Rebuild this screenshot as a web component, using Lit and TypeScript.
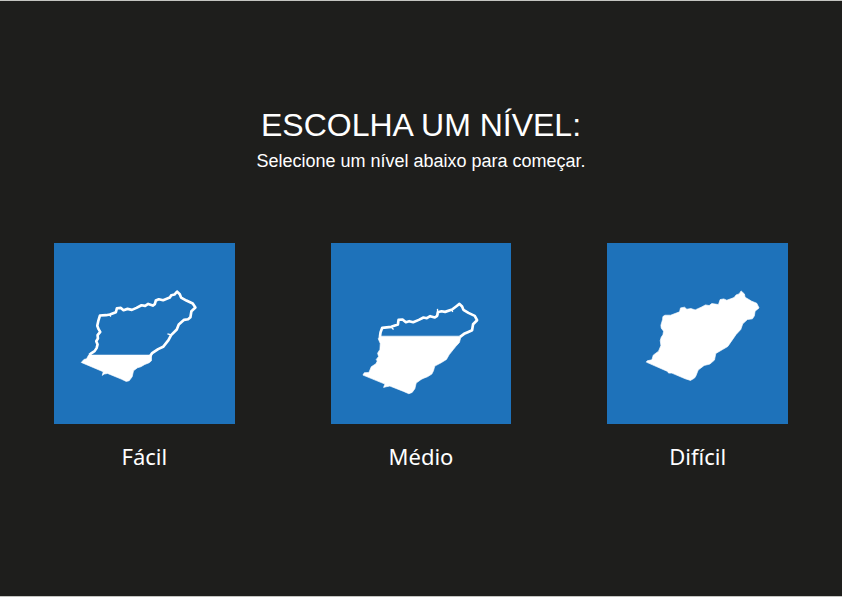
import { LitElement, html, css, svg } from "lit";
import { customElement, property } from "lit/decorators.js";

interface Level {
  name: string;
  outline: string;
  spurs: string;
  fill: string;
  x: number;
  y: number;
}

const LEVELS: Level[] = [
  {
    name: "Fácil",
    x: 48,
    y: 111,
    outline:
      "M58 226L66 219L74 214L80 205L83 194L79 184L84 176L83 166L91 156L86 148L82 138L85 124L90 107L108 106L120 104L138 97L141 85L153 84L161 91L173 87L186 90L200 84L215 76L226 78L235 72L249 77L255 73L258 62L267 58L280 61L300 53L305 46L314 44L322 35L330 43L334 53L350 62L369 71L377 83L365 94L362 112L355 118L343 120L327 134L321 149L304 166L296 181L280 201L265 208L247 220L240 230",
    spurs: "M118 104L123 110M293 162L305 165M300 55L303 44",
    fill:
      "M56 226H245L245 243L238 249L225 254L213 261L203 264L191 273L187 291L178 303L169 305L154 298L113 281L103 283L97 287L100 276L34 248L42 239L50 237Z",
  },
  {
    name: "Médio",
    x: 57,
    y: 141,
    outline:
      "M90 141L92 127L97 114L124 111L144 104L146 90L158 89L168 97L178 94L190 97L207 90L221 83L231 85L241 79L255 83L262 78L264 67L275 64L286 66L307 59L320 49L329 42L337 50L341 60L356 69L375 78L382 91L370 103L367 121L354 127L343 132L331 141",
    spurs: "M263 57L264 76M123 111L131 119M306 61L309 66",
    fill:
      "M89 139H334L329 158L318 170L310 180L298 195L290 209L274 219L255 229L251 243L246 253L233 261L220 266L214 269L199 280L195 297L187 308L177 312L161 305L120 289L109 291L101 293L105 283L39 256L43 249L57 248L64 231L78 222L82 214L79 209L86 200L83 190L90 179L91 161L85 147Z",
  },
  {
    name: "Difícil",
    x: 84,
    y: 111,
    outline: "",
    spurs: "",
    fill:
      "M34 247L37 243L51 240L55 226L71 214L78 197L76 182L79 172L84 165L86 154L79 145L78 136L83 119L84 110L90 106L107 106L134 96L137 84L149 82L156 88L168 86L181 90L199 82L212 75L223 77L231 71L251 74L256 59L267 57L276 61L298 53L304 45L313 42L319 33L329 42L331 52L351 64L366 70L373 84L361 94L359 108L353 117L338 119L324 132L318 149L304 164L288 187L279 200L262 210L243 221L239 241L225 253L208 257L190 271L183 289L179 295L167 302L151 297L111 280L101 280L98 275Z",
  },
];

@customElement("level-option")
export class LevelOption extends LitElement {
  @property({ attribute: false }) level!: Level;

  static styles = css`
    :host {
      display: block;
      min-width: 0;
    }
    .option {
      display: flex;
      flex-direction: column;
      gap: 16px;
      width: 100%;
      padding: 0;
      border: 0;
      background: none;
      color: #fff;
      font: 22px/32px "Noto Sans", sans-serif;
      text-align: center;
      cursor: pointer;
    }
    .tile {
      display: block;
      width: 100%;
      aspect-ratio: 1;
      background: #1e72ba;
    }
    .outline,
    .spurs {
      fill: none;
      stroke: #fff;
      stroke-width: 8;
      stroke-linejoin: round;
    }
    .spurs {
      stroke-width: 4;
    }
    .fill {
      fill: #fff;
      stroke: #fff;
      stroke-width: 2;
      stroke-linejoin: round;
    }
  `;

  render() {
    const { name, outline, spurs, fill, x, y } = this.level;
    return html`
      <button class="option" type="button">
        <svg class="tile" viewBox="0 0 543 543" aria-hidden="true">
          <g transform="translate(${x} ${y})">
            ${outline
              ? svg`<path class="outline" d=${outline} /><path class="spurs" d=${spurs} />`
              : null}
            <path class="fill" d=${fill} />
          </g>
        </svg>
        <span>${name}</span>
      </button>
    `;
  }
}

@customElement("app-root")
export class AppRoot extends LitElement {
  static styles = css`
    :host {
      display: block;
    }
    .page {
      box-sizing: border-box;
      min-height: 100vh;
      padding: 104px 54px 48px;
      border-top: 1px solid #c4c5c1;
      border-bottom: 1px solid #c4c5c1;
      background: #1e1e1c;
      color: #fff;
      font-family: "Liberation Sans", Arial, sans-serif;
    }
    .intro {
      text-align: center;
    }
    .title {
      margin: 0;
      font-size: 32px;
      font-weight: 400;
      line-height: 40px;
    }
    .hint {
      margin: 4px 0 0;
      font-size: 18px;
      line-height: 24px;
    }
    .levels {
      display: grid;
      grid-template-columns: repeat(3, minmax(0, 1fr));
      gap: 96px;
      margin-top: 70px;
    }
  `;

  render() {
    return html`
      <main class="page">
        <header class="intro">
          <h1 class="title">ESCOLHA UM NÍVEL:</h1>
          <p class="hint">Selecione um nível abaixo para começar.</p>
        </header>
        <section class="levels" aria-label="Níveis">
          ${LEVELS.map((level) => html`<level-option .level=${level}></level-option>`)}
        </section>
      </main>
    `;
  }
}
